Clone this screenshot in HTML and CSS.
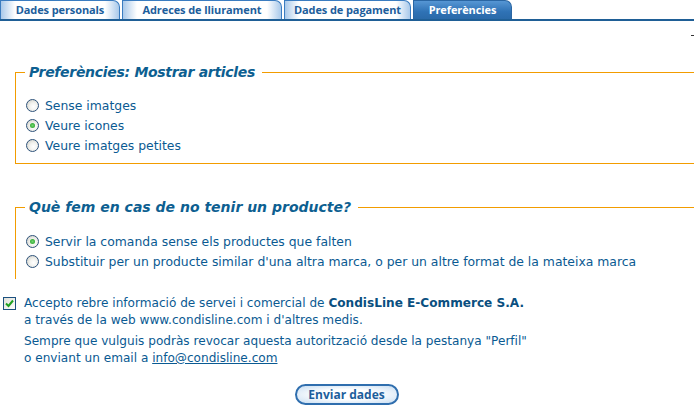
FILE: index.html
```html
<!DOCTYPE html>
<html lang="ca">
<head>
    <meta charset="UTF-8">
    <title>Preferències</title>
    <link rel="stylesheet" href="styles.css">
</head>
<body>
    <div class="tabs">
        <div class="tab t1">Dades personals</div>
        <div class="tab t2">Adreces de lliurament</div>
        <div class="tab t3">Dades de pagament</div>
        <div class="tab t4 active">Preferències</div>
    </div>
    <div class="mark"></div>

    <fieldset class="box box1">
        <legend>Preferències: Mostrar articles</legend>
        <div class="opt"><span class="radio"></span>Sense imatges</div>
        <div class="opt"><span class="radio on"></span>Veure icones</div>
        <div class="opt"><span class="radio"></span>Veure imatges petites</div>
    </fieldset>

    <fieldset class="box box2">
        <legend>Què fem en cas de no tenir un producte?</legend>
        <div class="opt"><span class="radio on"></span>Servir la comanda sense els productes que falten</div>
        <div class="opt"><span class="radio"></span>Substituir per un producte similar d'una altra marca, o per un altre format de la mateixa marca</div>
    </fieldset>

    <div class="accept">
        <span class="check">
            <svg width="9" height="9" viewBox="0 0 9 9"><path d="M1 4.5 L3.5 7 L8 1.5" fill="none" stroke="#21a121" stroke-width="2"/></svg>
        </span>
        <div class="accept-text">
            <p>Accepto rebre informació de servei i comercial de <b>CondisLine E-Commerce S.A.</b><br>a través de la web www.condisline.com i d'altres medis.</p>
            <p>Sempre que vulguis podràs revocar aquesta autorització desde la pestanya "Perfil"<br>o enviant un email a <a href="#">info@condisline.com</a></p>
        </div>
    </div>

    <div class="actions">
        <span class="btn">Enviar dades</span>
    </div>
</body>
</html>
```

FILE: styles.css
```css
html, body {
    margin: 0;
    padding: 0;
    overflow: hidden;
}
body {
    font-family: "DejaVu Sans", Verdana, sans-serif;
    font-size: 11px;
    color: #0a5a92;
    background: #fff;
    width: 694px;
    height: 407px;
}
.tabs {
    display: flex;
    height: 19px;
    border-bottom: 2px solid #1f5f96;
}
.tab {
    box-sizing: border-box;
    height: 19px;
    margin-right: 2px;
    border: 1px solid #3a7cc0;
    border-bottom: none;
    border-top-right-radius: 7px;
    background: linear-gradient(to right, #a9c9ea 0, #ffffff 14px, #ffffff calc(100% - 14px), #a9c9ea 100%);
    color: #1d5e9c;
    font-family: "Open Sans", sans-serif;
    font-weight: bold;
    font-size: 11px;
    line-height: 17px;
    text-align: center;
    letter-spacing: -0.1px;
}
.t1 { width: 120px; }
.t2 { width: 160px; }
.t3 { width: 127px; }
.t4 { width: 99px; }
.tab.active {
    background: linear-gradient(to bottom, #5696d4 0, #2f72b5 60%, #2a6aa9 100%);
    border-color: #2a66a3;
    color: #fff;
}
.mark {
    width: 3px;
    height: 1px;
    background: #333;
    margin: 14px 0 0 691px;
}
.box {
    margin: 0 -40px 0 15px;
    padding: 0 0 0 10px;
    border: 1px solid #f29c00;
    border-width: 1px 0 1px 1px;
}
.box1 {
    margin-top: 28px;
    padding-top: 15px;
    padding-bottom: 8px;
}
.box1 legend {
    letter-spacing: -0.3px;
}
.box2 {
    margin-top: 35px;
    padding-top: 16px;
    padding-bottom: 8px;
    border-bottom: none;
}
.box legend {
    font-style: italic;
    font-weight: bold;
    font-size: 14px;
    line-height: 16px;
    color: #0d5f91;
    padding: 0 7px 0 4px;
    margin-left: -1px;
}
.opt {
    display: flex;
    align-items: center;
    height: 20px;
    font-size: 12.4px;
}
.radio {
    box-sizing: border-box;
    width: 13px;
    height: 13px;
    border-radius: 50%;
    border: 1px solid #2d527a;
    background: radial-gradient(circle at 60% 60%, #ffffff 0, #f2f2ee 40%, #c8c8c0 100%);
    margin-right: 6px;
    position: relative;
}
.radio.on::after {
    content: "";
    position: absolute;
    left: 3px;
    top: 3px;
    width: 5px;
    height: 5px;
    border-radius: 50%;
    background: radial-gradient(circle, #6fd56f 0, #1f9a1f 100%);
}
.accept {
    display: flex;
    margin: 16px 0 0 3px;
}
.check {
    box-sizing: border-box;
    width: 13px;
    height: 13px;
    border: 1px solid #1c5180;
    background: linear-gradient(135deg, #e0e0d8, #ffffff);
    display: flex;
    align-items: center;
    justify-content: center;
    margin: 2px 8px 0 0;
}
.accept-text p {
    margin: 0 0 4px 0;
    line-height: 17px;
    font-size: 12.1px;
}
.accept-text b {
    color: #0a4f80;
}
.accept-text a {
    color: #0a5a92;
}
.actions {
    display: flex;
    justify-content: center;
    margin-top: 13px;
}
.btn {
    box-sizing: border-box;
    width: 104px;
    height: 21px;
    border-radius: 11px;
    border: 2px solid #2f6eae;
    background: radial-gradient(ellipse at center, #ffffff 40%, #c7ddf2 100%);
    color: #1d5e9c;
    font-family: "Open Sans", sans-serif;
    font-weight: bold;
    font-size: 12px;
    line-height: 17px;
    text-align: center;
    margin-left: -1px;
}
```
